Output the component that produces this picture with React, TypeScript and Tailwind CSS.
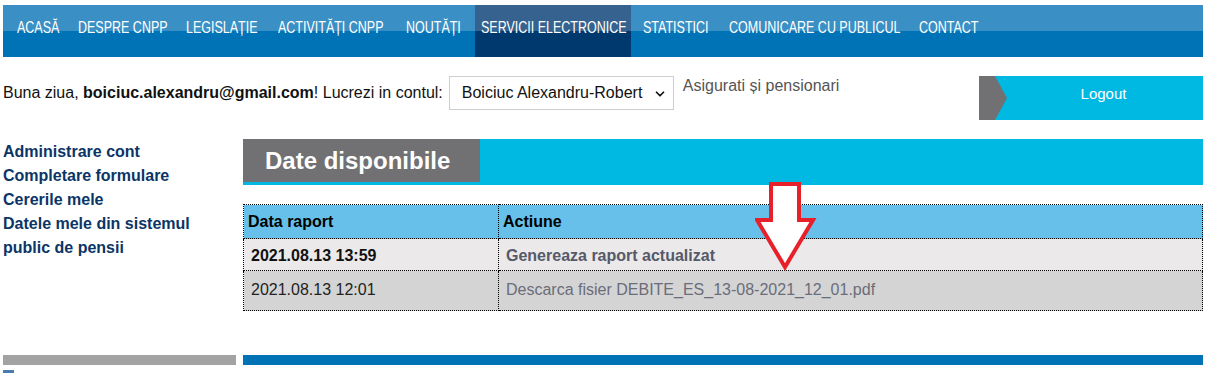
import { ChevronDown } from "lucide-react";

const navItems = [
  { label: "ACASĂ", cls: "w-[61px]" },
  { label: "DESPRE CNPP", cls: "w-[108px]" },
  { label: "LEGISLAȚIE", cls: "w-[92px]" },
  { label: "ACTIVITĂȚI CNPP", cls: "w-[128px]" },
  { label: "NOUTĂȚI", cls: "w-[75px]" },
  {
    label: "SERVICII ELECTRONICE",
    cls: "w-[156px] bg-[linear-gradient(to_bottom,#35628e_0,#35628e_50%,#00396e_50%,#00396e_100%)]",
  },
  { label: "STATISTICI", cls: "w-[92px] pl-[12px]" },
  { label: "COMUNICARE CU PUBLICUL", cls: "w-[190px]" },
  { label: "CONTACT", cls: "w-[90px]" },
];

const sideLinks = [
  "Administrare cont",
  "Completare formulare",
  "Cererile mele",
  "Datele mele din sistemul public de pensii",
];

function NavBar() {
  return (
    <nav className="mt-[5px] h-[52px] flex pl-[8px] bg-[linear-gradient(to_bottom,#3a90c5_0,#3a90c5_50%,#0073b6_50%,#0073b6_100%)]">
      {navItems.map((item) => (
        <a
          key={item.label}
          className={`h-full shrink-0 px-[6px] pt-[13px] text-white text-[17px] leading-[20px] whitespace-nowrap [font-family:'Liberation_Sans',Arial,sans-serif] ${item.cls}`}
        >
          <span className="inline-block origin-left scale-x-[0.735]">{item.label}</span>
        </a>
      ))}
    </nav>
  );
}

function UserBar() {
  return (
    <div className="flex items-start mt-[19px] h-[44px] text-[16px] [font-family:'Liberation_Sans',Arial,sans-serif]">
      <div className="flex items-center h-[34px] text-[#111]">
        <span>
          Buna ziua, <b>boiciuc.alexandru@gmail.com</b>! Lucrezi in contul:
        </span>
        <div className="relative ml-[6px] w-[225px] h-[34px] border border-[#cfcfcf] bg-white flex items-center pl-[12px] text-[#111]">
          Boiciuc Alexandru-Robert
          <ChevronDown className="absolute right-[6px] top-[10px] w-[14px] h-[14px]" strokeWidth={3} />
        </div>
        <span className="self-start ml-[9px] -mt-[2px] text-[#555]">Asigurati și pensionari</span>
      </div>
      <div className="ml-auto w-[224px] h-[44px] flex bg-[#00b9e3]">
        <svg width="33" height="44" viewBox="0 0 33 44" className="shrink-0">
          <polygon points="0,0 16,0 28,22 16,44 0,44" fill="#717073" />
        </svg>
        <span className="flex-1 text-center text-white text-[15px] pt-[7px] pr-[8px]">Logout</span>
      </div>
    </div>
  );
}

function Sidebar() {
  return (
    <aside className="w-[240px] shrink-0 pt-[20px] [font-family:'Liberation_Sans',Arial,sans-serif] font-bold text-[16px] leading-[24px] text-[#0b3566]">
      {sideLinks.map((l) => (
        <a key={l} className="block w-[220px]">
          {l}
        </a>
      ))}
    </aside>
  );
}

function DataTable() {
  return (
    <table className="mt-[19px] w-full border-collapse text-[16px] [font-family:'Liberation_Sans',Arial,sans-serif]">
      <thead>
        <tr className="bg-[#66c0ea] h-[34px]">
          <th className="w-[255px] text-left font-bold px-[4px] border border-dotted border-black">Data raport</th>
          <th className="text-left font-bold px-[4px] border border-dotted border-black">Actiune</th>
        </tr>
      </thead>
      <tbody>
        <tr className="bg-[#ebe9e9] h-[32px]">
          <td className="px-[7px] pt-[3px] font-bold text-[#111] border border-dotted border-black">2021.08.13 13:59</td>
          <td className="px-[7px] pt-[3px] font-bold text-[#55596a] border border-dotted border-black">Genereaza raport actualizat</td>
        </tr>
        <tr className="bg-[#d4d4d4] h-[40px]">
          <td className="px-[7px] pb-[2px] text-[#222] border border-dotted border-black">2021.08.13 12:01</td>
          <td className="px-[7px] pb-[2px] text-[#6a6d7a] border border-dotted border-black">Descarca fisier DEBITE_ES_13-08-2021_12_01.pdf</td>
        </tr>
      </tbody>
    </table>
  );
}

function Main() {
  return (
    <main className="relative flex-1 pt-[19px]">
      <div className="h-[46px] bg-[#00b9e3]">
        <div className="w-[237px] h-[43px] bg-[#717073] flex items-center pl-[22px] text-white font-bold text-[24px] [font-family:'Liberation_Sans',Arial,sans-serif]">
          Date disponibile
        </div>
      </div>
      <DataTable />
      <svg
        width="64"
        height="90"
        viewBox="0 0 64 90"
        className="absolute left-[512px] top-[62px]"
      >
        <polygon
          points="16,2 44,2 44,38 58,38 30,85 2,38 16,38"
          fill="white"
          stroke="#e8202a"
          strokeWidth="4"
          strokeLinejoin="miter"
        />
      </svg>
    </main>
  );
}

export default function App() {
  return (
    <div className="w-[1200px] ml-[3px] bg-white h-[373px] overflow-hidden">
      <NavBar />
      <UserBar />
      <div className="flex">
        <Sidebar />
        <Main />
      </div>
      <div className="flex mt-[44px] h-[10px]">
        <div className="w-[233px] bg-[#a3a3a3]" />
        <div className="ml-[7px] flex-1 bg-[#0073b6]" />
      </div>
      <div className="mt-[5px] w-[11px] h-[4px] bg-[#4a7ab0]" />
    </div>
  );
}
